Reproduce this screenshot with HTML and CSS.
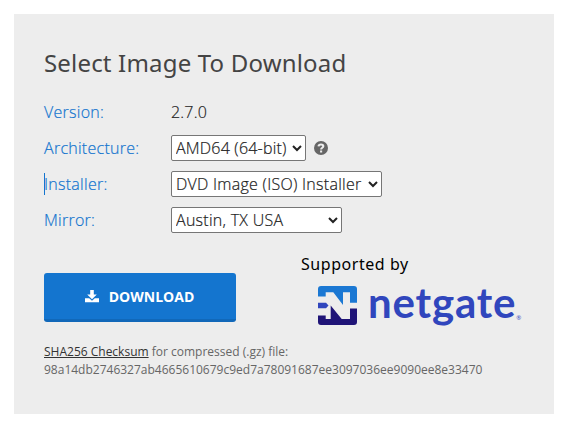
FILE: index.html
```html
<!DOCTYPE html>
<html lang="en">
<head>
<meta charset="utf-8">
<title>Select Image To Download</title>
<link rel="stylesheet" href="styles.css">
</head>
<body>
<main class="panel">
  <h1 class="title">Select Image To Download</h1>
  <form class="options">
    <span class="label">Version:</span>
    <span class="value">2.7.0</span>
    <label class="label" for="arch">Architecture:</label>
    <div class="field">
      <select id="arch" class="select select-arch"><option>AMD64 (64-bit)</option></select>
      <svg class="help" viewBox="0 0 14 14"><circle cx="7" cy="7" r="7"/><path d="M4.500 5.400C4.700 4 5.600 3.500 7 3.500c1.400 0 2.300.7 2.300 1.800C9.300 6.800 7.100 6.700 7.100 8.500M7.100 9.400v2"/></svg>
    </div>
    <label class="label caret" for="installer">Installer:</label>
    <div class="field"><select id="installer" class="select select-installer"><option>DVD Image (ISO) Installer</option></select></div>
    <label class="label" for="mirror">Mirror:</label>
    <div class="field"><select id="mirror" class="select select-mirror"><option>Austin, TX USA</option></select></div>
  </form>
  <div class="actions">
    <button class="download" type="button">
      <svg class="download-icon" viewBox="0 0 14 13"><path d="M5.200 0h3.600v4.500h3L7 9.200 2.200 4.500h3zM0 8.300h4.200L7 10.700l2.800-2.400H14V12.200H0z"/></svg>
      <span>DOWNLOAD</span>
    </button>
    <div class="sponsor">
      <p class="supported">Supported by</p>
      <div class="brand">
        <svg class="mark" viewBox="0 0 39 39">
          <path fill="#1b78d3" d="M3 0h33q3 0 3 3v13.700h-7V6.300h-7V19L15.300 6.300H7.700v4.200H0V3q0-3 3-3z"/>
          <path fill="#3046bd" d="M0 16.700h8l2.500 2.800L8 22.300H0z"/>
          <path fill="#1f1477" d="M0 29.500h7.700V33h5V19.500L23.700 33H32V22.500h7V36q0 3-3 3H3q-3 0-3-3z"/>
        </svg>
        <span class="wordmark">netgate</span><span class="reg">®</span>
      </div>
    </div>
  </div>
  <p class="checksum"><a class="sha">SHA256 Checksum</a> for compressed (.gz) file:<br><span class="hash">98a14db2746327ab4665610679c9ed7a78091687ee3097036ee9090ee8e33470</span></p>
</main>
</body>
</html>
```
FILE: styles.css
```css
* { box-sizing: border-box; }
body { margin: 0; background: #fff; font-family: "Open Sans", sans-serif; }
.panel { width: 540px; height: 400px; margin: 14px; padding: 30px; background: #ededed; }
.title { margin: 0; height: 50px; font: 400 24px/38px "Noto Sans", sans-serif; letter-spacing: 0.18px; color: #444; white-space: nowrap; }
.options { display: grid; grid-template-columns: 127px 1fr; grid-auto-rows: 36px; align-items: center; font-weight: 300; font-size: 16px; letter-spacing: 0.27px; color: #222; -webkit-text-stroke: 0.2px; }
.value { letter-spacing: 0.2px; }
.label { color: #1475cf; line-height: 22px; }
.caret { border-left: 1px solid #1475cf; text-indent: -1px; }
.field { display: flex; align-items: center; gap: 8px; }
.select { height: 26px; padding: 0; border: 1px solid #767676; border-radius: 2px; background-color: #fff; color: #222; font: 300 16px "Open Sans", sans-serif; letter-spacing: 0.27px; }
.select-arch { width: 135px; letter-spacing: 0.2px; }
.select-installer { width: 211px; }
.select-mirror { width: 171px; }
.help { width: 14px; height: 14px; fill: #666; }
.help path { fill: none; stroke: #ededed; stroke-width: 2.100; }
.actions { display: flex; align-items: flex-start; height: 105px; padding-top: 15px; }
.download { display: flex; align-items: center; justify-content: center; gap: 10px; width: 192px; height: 49px; margin-top: 20px; padding: 0 1px 0 0; border: 0; border-bottom: 3px solid #1168b9; border-radius: 3px; background: #1475cf; color: #fff; font: 700 14px "Open Sans", sans-serif; }
.download-icon { width: 14px; height: 13px; fill: #fff; }
.sponsor { margin-left: 65px; }
.supported { margin: 0; color: #000; font: 400 16px/23px "Noto Sans", sans-serif; letter-spacing: 0.55px; white-space: nowrap; }
.brand { display: flex; margin: 10px 0 0 17px; height: 39px; }
.mark { width: 39px; height: 39px; flex: none; }
.wordmark { margin: -4px 0 0 11px; font: 700 42px/40px Lato, sans-serif; letter-spacing: 0.8px; color: #3046bd; }
.reg { align-self: flex-end; font: 400 6px/14px "Open Sans", sans-serif; color: #3046bd; }
.checksum { margin: 0; font-size: 12px; line-height: 18px; color: #666; }
.sha { color: #333; text-decoration: underline; }
```
